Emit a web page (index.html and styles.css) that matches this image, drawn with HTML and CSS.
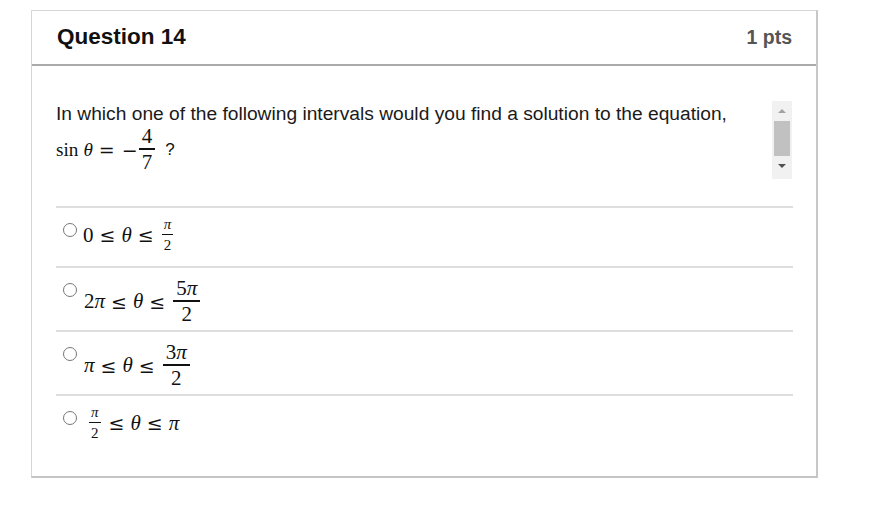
FILE: index.html
```html
<!DOCTYPE html>
<html lang="en">
<head>
  <meta charset="utf-8">
  <title>Question 14</title>
  <link rel="stylesheet" href="styles.css">
</head>
<body>
  <div class="quiz-card">
    <div class="card-header">
      <h2 class="q-title">Question 14</h2>
      <span class="q-points">1 pts</span>
    </div>

    <div class="card-body">
      <div class="q-text">
        <div class="q-content">
          <p>In which one of the following intervals would you find a solution to the equation,</p>
          <p class="math eq">
            <span>sin</span><span class="it th">θ</span><span class="rel">=</span><span class="minus">−</span>
            <span class="frac big"><span class="num">4</span><span class="den">7</span></span>
            <span class="qmark">?</span>
          </p>
        </div>
        <div class="fake-scroll">
          <span class="arr up"></span>
          <span class="thumb"></span>
          <span class="arr down"></span>
        </div>
      </div>

      <ul class="answers">
        <li class="answer a1">
          <span class="radio"></span>
          <span class="math">0<span class="rel">≤</span><span class="it">θ</span><span class="rel">≤</span><span class="frac small"><span class="num it">π</span><span class="den">2</span></span></span>
        </li>
        <li class="answer a2">
          <span class="radio"></span>
          <span class="math low">2<span class="it">π</span><span class="rel">≤</span><span class="it">θ</span><span class="rel">≤</span><span class="frac big"><span class="num">5<span class="it">π</span></span><span class="den">2</span></span></span>
        </li>
        <li class="answer a3">
          <span class="radio"></span>
          <span class="math low"><span class="it">π</span><span class="rel">≤</span><span class="it">θ</span><span class="rel">≤</span><span class="frac big"><span class="num">3<span class="it">π</span></span><span class="den">2</span></span></span>
        </li>
        <li class="answer a4">
          <span class="radio"></span>
          <span class="math"><span class="frac small"><span class="num it">π</span><span class="den">2</span></span><span class="rel">≤</span><span class="it">θ</span><span class="rel">≤</span><span class="it">π</span></span>
        </li>
      </ul>
    </div>
  </div>
</body>
</html>
```

FILE: styles.css
```css
* { margin: 0; padding: 0; box-sizing: border-box; }
body {
  font-family: "Liberation Sans", Arial, sans-serif;
  background: #fff; color: #1a1a1a;
}
.quiz-card {
  width: 787px; height: 468px; margin: 10px 0 0 31px;
  border: 1px solid #d6d6d6; border-right: 2px solid #c8c8c8; border-bottom: 2px solid #c4c4c4;
}
.card-header {
  height: 55px; padding: 0 24px 0 25px;
  display: flex; justify-content: space-between; align-items: center;
  border-bottom: 2px solid #aaa;
}
.q-title { font-size: 22.5px; font-weight: 700; color: #111; margin-top: -2px; }
.q-points { font-size: 19.5px; font-weight: 700; color: #555; }

.card-body { padding: 36px 23px 0 24px; }
.q-text { display: flex; justify-content: space-between; align-items: flex-start; }
.q-content p { font-size: 19.2px; line-height: 24px; }
.fake-scroll {
  width: 20px; height: 78px; margin-top: -1px; margin-right: 1px; background: #f1f1f1;
  display: flex; flex-direction: column; align-items: center;
}
.fake-scroll .thumb { width: 16px; height: 35px; background: #c1c1c1; margin: 0 0 8px; }
.arr { width: 0; height: 0; border-left: 4px solid transparent; border-right: 4px solid transparent; }
.arr.up { border-bottom: 4px solid #a3a3a3; margin: 8px 0 8px; }
.arr.down { border-top: 4px solid #505050; }

.math {
  font-family: "Liberation Serif", "DejaVu Serif", serif; font-size: 21px;
  display: inline-flex; align-items: center; color: #111;
}
.it { font-style: italic; }
.rel { margin: 0 6px; font-family: "DejaVu Serif", serif; font-size: 19px; }
.eq { margin-top: 0; line-height: 1; }
.eq .th { margin-left: 5px; }
.eq .minus { margin: 0 1px 0 1px; font-family: "DejaVu Serif", serif; font-size: 19px; }
.eq .frac { margin: 0; }
.eq .qmark { font-family: "Liberation Sans", Arial, sans-serif; font-size: 17px; margin-left: 10px; }

.frac { display: inline-flex; flex-direction: column; align-items: center; margin: 0 2px; }
.frac .num { border-bottom: 2px solid #111; padding: 0 3px 1px; }
.frac .den { padding-top: 2px; }
.frac.big .num, .frac.big .den { font-size: 21px; line-height: 21px; }
.frac.small .num, .frac.small .den { font-size: 15px; line-height: 15px; }
.frac.small .num { padding: 0 2px 2px; border-bottom-width: 1.5px; }
.frac.small .den { padding-top: 3px; }

.answers { list-style: none; margin-top: 27px; }
.answer {
  display: flex; align-items: flex-start; gap: 6px;
  border-top: 2px solid #dedede; padding: 14px 0 0 7px;
}
.a1 { height: 60px; }
.a2, .a3 { height: 64px; }
.a4 { height: 70px; }
.radio {
  width: 14px; height: 14px; border: 1px solid #777; border-radius: 50%;
  margin-top: 1px; flex: none;
}
.answer .math.low { margin-top: -4px; margin-left: 1px; }
.a1 .math { margin-top: -5px; }
.a4 .math { margin-top: -5px; margin-left: 4px; }
```
